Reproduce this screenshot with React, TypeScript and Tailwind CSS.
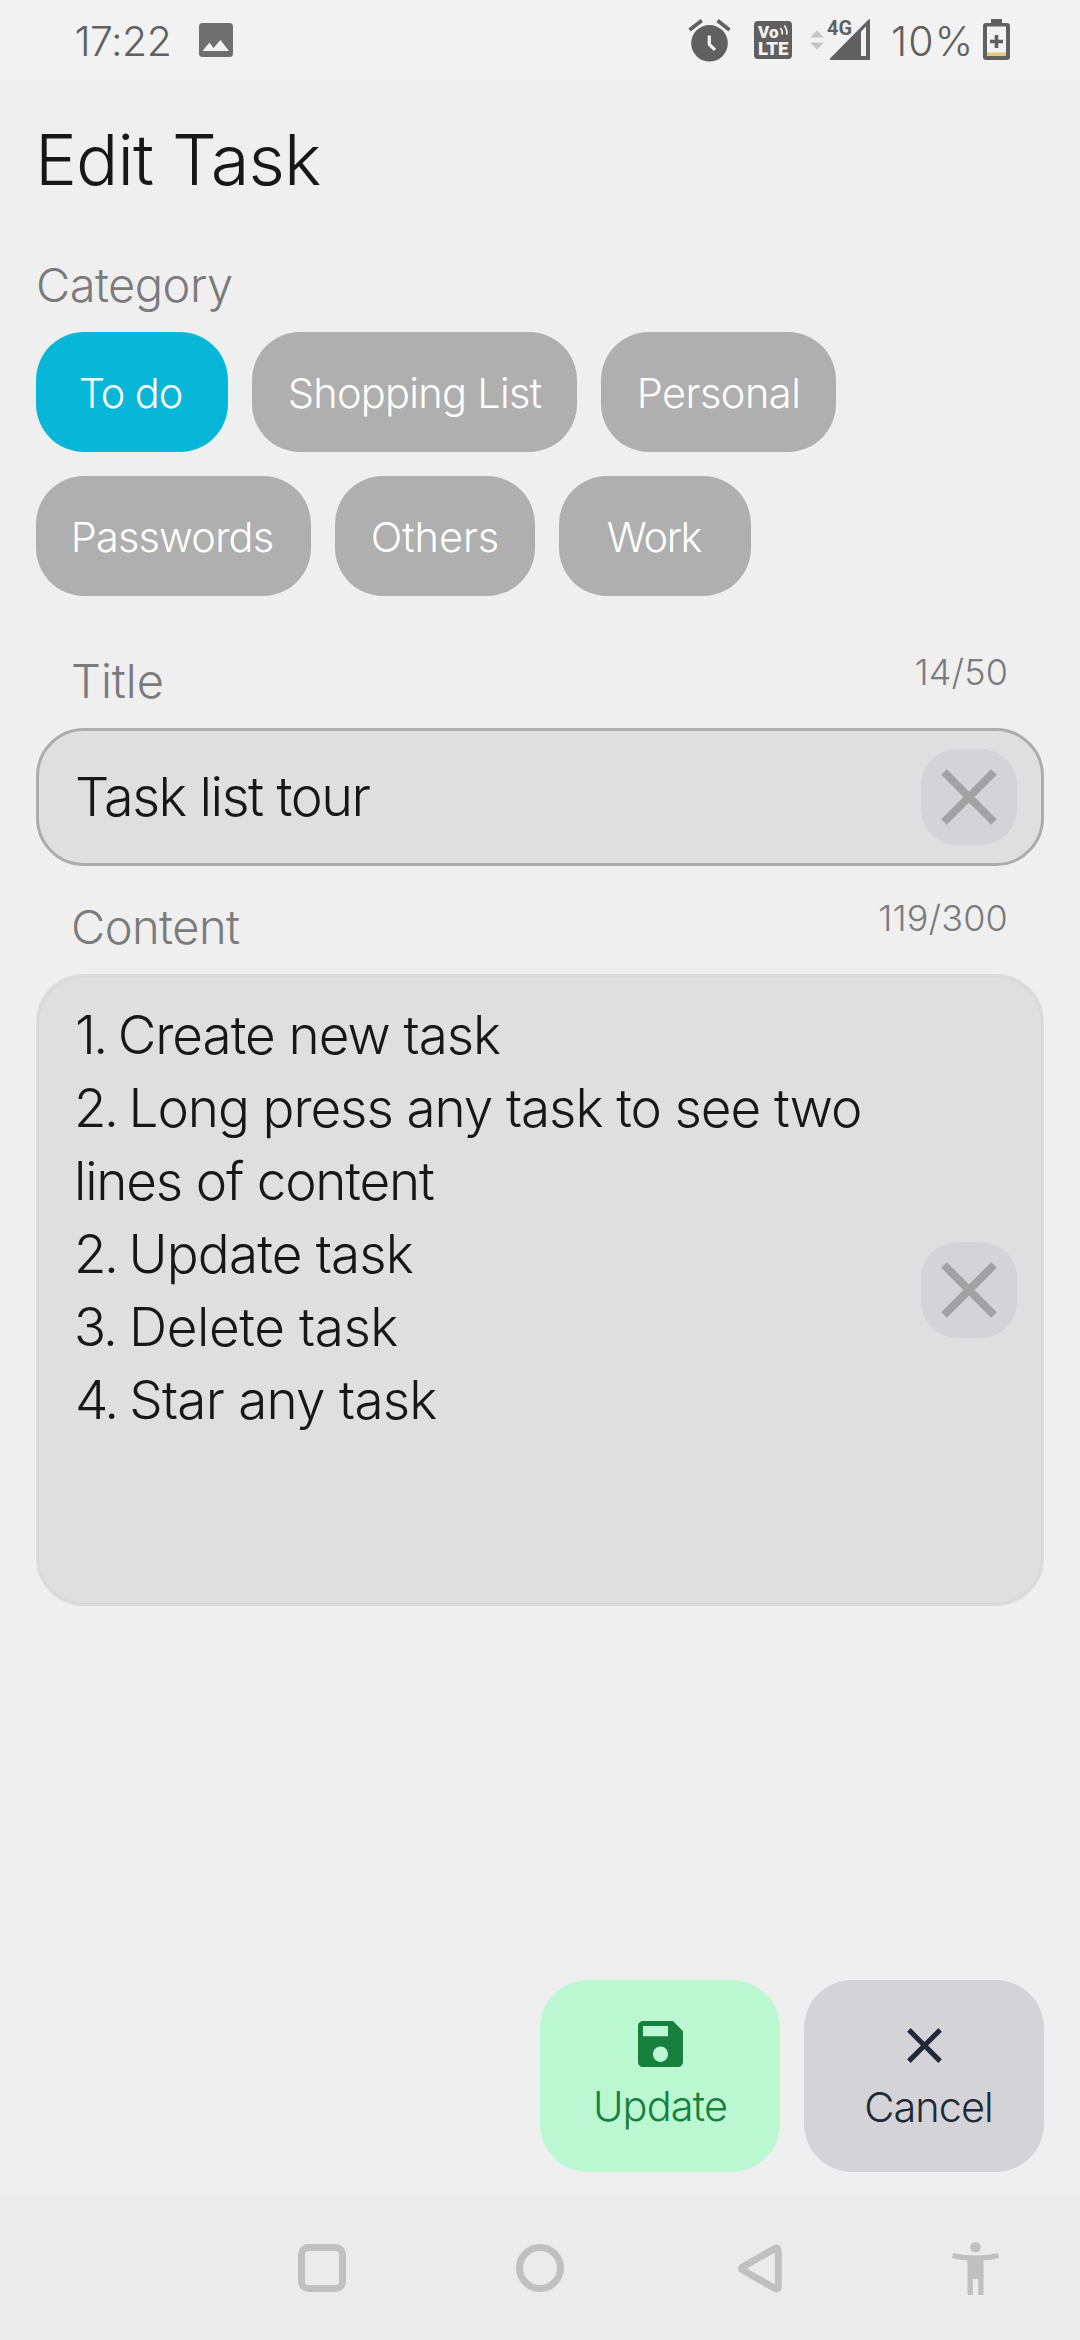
import type { ReactNode } from "react";

function ImageIcon() {
  return (
    <svg className="w-[34px] h-[34px]" viewBox="0 0 34 34">
      <rect width="34" height="34" rx="3.5" fill="#6f6f6f" />
      <path d="M3.5 28 10.5 19.5 14.5 25 21.5 17 30 28Z" fill="#f2f2f2" />
    </svg>
  );
}

function AlarmIcon() {
  return (
    <svg className="w-[44px] h-[44px]" viewBox="0 0 44 44">
      <circle cx="21.5" cy="25.3" r="18.3" fill="#606060" />
      <path d="M1.5 12 13.8 2.5M29.500 2.500 41.500 12" stroke="#606060" strokeWidth="3.8" fill="none" />
      <path d="M21.3 17.5V26.3L27 31.8" stroke="#f2f2f2" strokeWidth="3.2" fill="none" />
    </svg>
  );
}

function VolteIcon() {
  return (
    <svg className="w-[38px] h-[38px]" viewBox="0 0 38 38" fontFamily="Roboto, sans-serif" fontWeight="900" fill="#f2f2f2">
      <rect width="38" height="38" rx="4" fill="#606060" />
      <text x="4" y="17" fontSize="17" textLength="20.5" lengthAdjust="spacingAndGlyphs">Vo</text>
      <text x="4" y="34" fontSize="18.5" textLength="30.5" lengthAdjust="spacingAndGlyphs">LTE</text>
      <path d="M26.3 7Q29 10 28.2 13.500M30.300 4.500Q33.600 9 32.700 13.500" stroke="#f2f2f2" strokeWidth="1.6" fill="none" />
    </svg>
  );
}

function SignalIcon() {
  return (
    <svg className="w-[60px] h-[42px]" viewBox="0 0 60 42">
      <path d="M0 18.5 7 11.5 14 18.5ZM0 23.5H14L7 30.5Z" fill="#c6c6c6" />
      <path d="M60 0V41H20V39.5L58.5 0.5Z" fill="#606060" />
      <path d="M51 12.5 56 7.5V37H51Z" fill="#f2f2f2" />
      <text x="17" y="16" fontSize="20.5" fontFamily="Roboto, sans-serif" fontWeight="700" fill="#606060" stroke="#f2f2f2" strokeWidth="2.5" paintOrder="stroke" textLength="25" lengthAdjust="spacingAndGlyphs">4G</text>
    </svg>
  );
}

function BatteryIcon() {
  return (
    <svg className="w-[27px] h-[41px]" viewBox="0 0 27 41">
      <path d="M8 0H19V4H24Q27 4 27 7V38Q27 41 24 41H3Q0 41 0 38V7Q0 4 3 4H8Z" fill="#606060" />
      <rect x="4" y="7.5" width="19" height="29.5" fill="#f2f2f2" />
      <rect x="4" y="33.5" width="19" height="3.5" fill="#e8c880" />
      <path d="M13.5 16V29M7 22.5H20" stroke="#606060" strokeWidth="3.6" />
    </svg>
  );
}

function CrossIcon({ className, width }: { className: string; width: number }) {
  return (
    <svg className={className} viewBox="0 0 56 56">
      <path d="M3 3 53 53M53 3 3 53" stroke="currentColor" strokeWidth={width} fill="none" />
    </svg>
  );
}

function SaveIcon() {
  return (
    <svg className="w-[45px] h-[46px]" viewBox="3 3 18 18" preserveAspectRatio="none">
      <path fill="#17803d" d="M17 3H5c-1.11 0-2 .9-2 2v14c0 1.1.89 2 2 2h14c1.1 0 2-.9 2-2V7l-4-4zm-5 16c-1.66 0-3-1.34-3-3s1.34-3 3-3 3 1.34 3 3-1.34 3-3 3zm3-10H5V5h10v4z" />
    </svg>
  );
}

function Chip({ children, className }: { children: ReactNode; className: string }) {
  return (
    <button className={"flex h-[120px] items-center justify-center rounded-[48px] pt-[2px] text-[41.5px] leading-[50px] font-light whitespace-nowrap text-white " + className}>
      {children}
    </button>
  );
}

function ClearButton() {
  return (
    <button className="flex h-24 w-24 shrink-0 items-center justify-center rounded-[36px] bg-[#d4d3d8] text-[#a2a2a2]">
      <CrossIcon className="h-14 w-14" width={8} />
    </button>
  );
}

function FieldHeader({ label, labelClass, count, countClass }: { label: string; labelClass: string; count: string; countClass: string }) {
  return (
    <div className="flex h-[60px] items-start justify-between pr-9 pl-[35px] text-[#7b7b7b]">
      <span className={"text-[47px] leading-[60px] " + labelClass}>{label}</span>
      <span className={"text-[36px] leading-[42px] " + countClass}>{count}</span>
    </div>
  );
}

const lines = [
  { marker: "1. ", markerClass: "tracking-[-2.7px]", text: "Create new task", className: "tracking-[-1.02px]" },
  { marker: "2. ", markerClass: "tracking-[-2.6px]", text: "Long press any task to see two", className: "tracking-[-1.08px] -ml-[1px]" },
  { marker: "", markerClass: "", text: "lines of content", className: "tracking-[-1.2px] -ml-[1px]" },
  { marker: "2. ", markerClass: "tracking-[-2.6px]", text: "Update task", className: "tracking-[-0.83px] -ml-[1px]" },
  { marker: "3. ", markerClass: "tracking-[-1.9px]", text: "Delete task", className: "tracking-[-0.43px] -ml-[1px]" },
  { marker: "4. ", markerClass: "tracking-[-2.4px]", text: "Star any task", className: "tracking-[-0.75px]" },
];

export default function App() {
  return (
    <div className="flex h-[2340px] w-[1080px] flex-col overflow-hidden bg-[#efefef] font-['Inter',sans-serif] font-light text-[#171717]">
      <header className="flex h-20 shrink-0 items-start bg-[#f2f2f2] text-[41px] leading-[50px] text-[#606060]">
        <span className="mt-4 ml-[74.5px] w-[124.5px] tracking-[-0.56px]">17:22</span>
        <div className="mt-[23px]"><ImageIcon /></div>
        <div className="mt-[18px] ml-auto"><AlarmIcon /></div>
        <div className="mt-[21px] ml-[22px]"><VolteIcon /></div>
        <div className="mt-[19px] ml-[18px]"><SignalIcon /></div>
        <span className="mt-4 ml-[21px] w-[92px] tracking-[1.2px]">10%</span>
        <div className="mt-[19px] mr-[70px]"><BatteryIcon /></div>
      </header>

      <main className="flex grow flex-col px-9">
        <h1 className="-ml-[1px] mt-10 h-20 text-[70.5px] leading-[80px] tracking-[-0.94px]">Edit Task</h1>
        <h2 className="mt-[55px] h-[60px] text-[47px] leading-[60px] tracking-[-0.53px] text-[#7b7b7b]">Category</h2>

        <div className="mt-[17px] flex flex-col gap-6">
          <div className="flex gap-6">
            <Chip className="w-[192px] bg-[#08b6d8] pr-[3px] tracking-[-1.1px]">To do</Chip>
            <Chip className="w-[325px] bg-[#afafaf] tracking-[-0.71px]">Shopping List</Chip>
            <Chip className="w-[235px] bg-[#afafaf] tracking-[-0.5px]">Personal</Chip>
          </div>
          <div className="flex gap-6">
            <Chip className="w-[275px] bg-[#afafaf] pr-[3px] tracking-[-0.82px]">Passwords</Chip>
            <Chip className="w-[200px] bg-[#afafaf] tracking-[-0.06px]">Others</Chip>
            <Chip className="w-[192px] bg-[#afafaf] pr-[2px] tracking-[-1.4px]">Work</Chip>
          </div>
        </div>

        <section className="mt-[55px]">
          <FieldHeader label="Title" labelClass="" count="14/50" countClass="tracking-[0.1px]" />
          <div className="mt-[17px] flex h-[138px] items-center rounded-[48px] border-[3px] border-[#acacac] bg-[#dfdfdf] pr-6 pl-9">
            <span className="grow text-[54px] leading-[66px] tracking-[-1.45px]">Task list tour</span>
            <ClearButton />
          </div>
        </section>

        <section className="mt-[31px]">
          <FieldHeader label="Content" labelClass="tracking-[-0.54px]" count="119/300" countClass="tracking-[0.15px]" />
          <div className="mt-[17px] flex h-[632px] items-center rounded-[48px] border-2 border-[#dcdcdc] bg-[#dfdfdf] pr-[25px] pl-[37px] shadow-[inset_0_0_0_1px_#d6d6d6]">
            <div className="mt-[23px] grow self-start text-[53px] leading-[73px]">
              {lines.map((line) => (
                <p key={line.text} className={"whitespace-pre " + line.className}>
                  <span className={line.markerClass}>{line.marker}</span>
                  {line.text}
                </p>
              ))}
            </div>
            <ClearButton />
          </div>
        </section>

        <div className="mt-auto mb-6 flex justify-end gap-6 text-[41.5px] leading-[50px]">
          <button className="flex h-48 w-60 flex-col items-center rounded-[48px] bg-[#bbf7d1] pt-[41px] text-[#17803d]">
            <SaveIcon />
            <span className="mt-[14px] tracking-[-0.87px]">Update</span>
          </button>
          <button className="flex h-48 w-60 flex-col items-center rounded-[48px] bg-[#d4d3d8] pt-12 text-[#1f2937]">
            <CrossIcon className="h-[35px] w-[35px]" width={8} />
            <span className="mt-[19px] pl-[9px] tracking-[-0.94px]">Cancel</span>
          </button>
        </div>
      </main>

      <nav className="flex h-36 shrink-0 items-center bg-[#ebebeb] pl-[298px] text-[#c0c0c0]">
        <svg className="h-12 w-12" viewBox="0 0 48 48">
          <rect x="3.5" y="3.5" width="41" height="41" rx="7" fill="none" stroke="currentColor" strokeWidth="7" />
        </svg>
        <svg className="ml-[170px] h-12 w-12" viewBox="0 0 48 48">
          <circle cx="24" cy="24" r="20.5" fill="none" stroke="currentColor" strokeWidth="7" />
        </svg>
        <svg className="ml-[173px] h-[49px] w-[45px]" viewBox="0 0 45 49">
          <path d="M41.300 6.500V42.500Q41 46 38 44.500L5.500 26Q3 24.500 5.500 23L38 4.500Q41 3 41.300 6.500Z" fill="none" stroke="currentColor" strokeWidth="7" strokeLinejoin="round" />
        </svg>
        <svg className="ml-[170px] h-[53px] w-[47px]" viewBox="0 0 47 53">
          <circle cx="23.5" cy="5.3" r="5.3" fill="currentColor" />
          <path d="M1 11Q23.500 16 46 11L47 16Q39.500 18 31.500 18.500V53H26.200V37H20.800V53H15.500V18.500Q7.500 18 0 16Z" fill="currentColor" />
        </svg>
      </nav>
    </div>
  );
}
